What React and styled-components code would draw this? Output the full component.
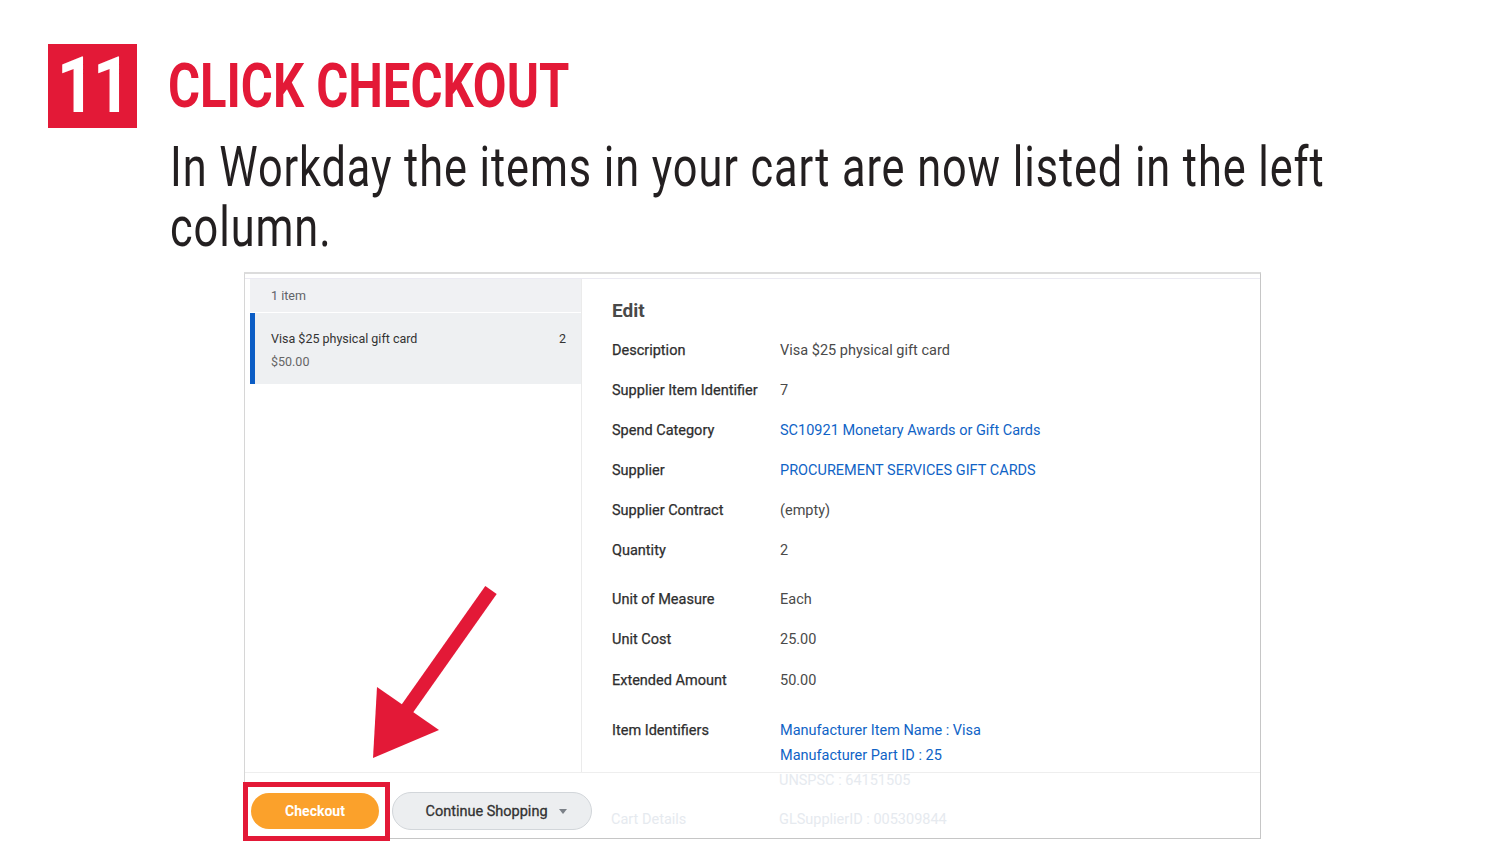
import styled, { createGlobalStyle } from 'styled-components'

const Global = createGlobalStyle`
    html, body {
        margin: 0;
        background: #ffffff;
        font-family: Roboto, "Liberation Sans", sans-serif;
    }
`

const RED = '#e31937'

const rows = [
    { label: 'Description', values: ['Visa $25 physical gift card'] },
    { label: 'Supplier Item Identifier', values: ['7'] },
    { label: 'Spend Category', values: ['SC10921 Monetary Awards or Gift Cards'], link: true },
    { label: 'Supplier', values: ['PROCUREMENT SERVICES GIFT CARDS'], link: true },
    { label: 'Supplier Contract', values: ['(empty)'] },
    { label: 'Quantity', values: ['2'] },
    { label: 'Unit of Measure', values: ['Each'], space: 9 },
    { label: 'Unit Cost', values: ['25.00'] },
    { label: 'Extended Amount', values: ['50.00'], space: 1 },
    { label: 'Item Identifiers', values: ['Manufacturer Item Name : Visa', 'Manufacturer Part ID : 25'], link: true, space: 10 },
]

export default function App() {
    return (
        <Page>
            <Global />
            <Header>
                <Badge><Squeeze $x={0.86}>11</Squeeze></Badge>
                <Title><Squeeze $x={0.79}>CLICK CHECKOUT</Squeeze></Title>
            </Header>

            <Subtitle>
                <Line>In Workday the items in your cart are now listed in the left</Line>
                <Line>column.</Line>
            </Subtitle>

            <Frame>
                <Body>
                    <Gutter />
                    <Sidebar>
                        <CountBar>1 item</CountBar>
                        <CartItem>
                            <ItemTop>
                                <span>Visa $25 physical gift card</span>
                                <span>2</span>
                            </ItemTop>
                            <ItemPrice>$50.00</ItemPrice>
                        </CartItem>
                    </Sidebar>
                    <Divider />
                    <Detail>
                        <EditTitle>Edit</EditTitle>
                        {rows.map((r) => (
                            <Row key={r.label} $space={r.space || 0}>
                                <Label>{r.label}</Label>
                                <Values>
                                    {r.values.map((v) => (
                                        <Value key={v} $link={r.link}>{v}</Value>
                                    ))}
                                </Values>
                            </Row>
                        ))}
                    </Detail>
                </Body>

                <Footer>
                    <Actions>
                        <CheckoutBtn>Checkout</CheckoutBtn>
                        <ShopBtn>
                            Continue Shopping
                            <Caret viewBox="0 0 10 6"><path d="M0 0 L10 0 L5 6 Z" fill="#7b8188" /></Caret>
                        </ShopBtn>
                    </Actions>
                    <Faded>
                        <span />
                        <span>UNSPSC : 64151505</span>
                        <span>Cart Details</span>
                        <span>GLSupplierID : 005309844</span>
                    </Faded>
                </Footer>

                <Highlight />
                <Arrow viewBox="0 0 130 178" width="130" height="178">
                    <polygon points="126.7,10 115.3,2 31.3,121 42.7,129" fill={RED} />
                    <polygon points="3,174 7,103 69,146" fill={RED} />
                </Arrow>
            </Frame>
        </Page>
    )
}

const Page = styled.div`
    padding: 44px 0 0 48px;
    height: 819px;
    overflow: hidden;
`

const Header = styled.div`
    display: flex;
    align-items: center;
    gap: 31px;
`

const Badge = styled.div`
    width: 89px;
    height: 84px;
    background: ${RED};
    color: #ffffff;
    display: flex;
    align-items: center;
    justify-content: center;
    font-weight: 700;
    font-size: 78px;
    line-height: 1;
    letter-spacing: -3px;
`

const Title = styled.h1`
    margin: 0;
    color: ${RED};
    font-size: 62px;
    font-weight: 700;
    line-height: 62px;
    white-space: nowrap;
`

const Squeeze = styled.span`
    display: inline-block;
    transform: scaleX(${(p) => p.$x});
    transform-origin: ${(p) => (p.$x > 0.8 ? 'center' : 'left center')};
`

const Subtitle = styled.div`
    margin: 9px 0 0 122px;
    color: #231f20;
    font-size: 56px;
    line-height: 60px;
    letter-spacing: 1.2px;
`

const Line = styled.div`
    white-space: nowrap;
    transform: scaleX(0.773);
    transform-origin: left center;
`

const Frame = styled.div`
    position: relative;
    margin: 15px 0 0 196px;
    width: 1015px;
    border-top: 2px solid #dcdcdc;
    border-left: 1px solid #d6d6d6;
    border-right: 1px solid #c6c6c6;
    border-bottom: 1px solid #c6c6c6;
    padding-top: 4px;
`

const Body = styled.div`
    display: grid;
    grid-template-columns: 5px 331px 1px 1fr;
    height: 493px;
    border-top: 1px solid #ebeaf2;
    overflow: hidden;
`

const Gutter = styled.div``

const Sidebar = styled.div`
    display: flex;
    flex-direction: column;
    gap: 1px;
`

const CountBar = styled.div`
    height: 33px;
    background: #f0f1f3;
    padding-left: 21px;
    display: flex;
    align-items: center;
    font-size: 12.5px;
    color: #5f6368;
`

const CartItem = styled.div`
    height: 71px;
    box-sizing: border-box;
    background: #eef0f2;
    border-left: 5px solid #0b5dc5;
    padding: 17px 15px 0 16px;
    font-size: 12.5px;
`

const ItemTop = styled.div`
    display: flex;
    justify-content: space-between;
    line-height: 18px;
    color: #333333;
`

const ItemPrice = styled.div`
    margin-top: 5px;
    line-height: 18px;
    color: #666666;
`

const Divider = styled.div`
    background: #ebebeb;
`

const Detail = styled.div`
    padding-left: 30px;
`

const EditTitle = styled.h2`
    margin: 20px 0 8px;
    font-size: 19px;
    line-height: 24px;
    font-weight: 700;
    color: #494949;
`

const Row = styled.div`
    display: grid;
    grid-template-columns: 168px 1fr;
    align-items: start;
    padding: 10px 0;
    margin-top: ${(p) => p.$space}px;
    font-size: 14.5px;
    line-height: 20px;
`

const Label = styled.div`
    color: #2e2e2e;
    -webkit-text-stroke: 0.25px #2e2e2e;
`

const Values = styled.div`
    display: flex;
    flex-direction: column;
    gap: 5px;
`

const Value = styled.div`
    color: ${(p) => (p.$link ? '#0f63c6' : '#4a4a4a')};
`

const Footer = styled.div`
    display: flex;
    height: 65px;
    border-top: 1px solid #eeeeee;
    overflow: hidden;
`

const Actions = styled.div`
    display: flex;
    align-items: center;
    gap: 13px;
    padding: 19px 0 0 6px;
    height: 38px;
`

const CheckoutBtn = styled.button`
    width: 128px;
    height: 36px;
    border: none;
    border-radius: 18px;
    background: #fba12b;
    color: #ffffff;
    font-family: Roboto, sans-serif;
    font-weight: 700;
    font-size: 14px;
`

const ShopBtn = styled.button`
    width: 200px;
    height: 38px;
    box-sizing: border-box;
    border: 1px solid #d2d6da;
    border-radius: 19px;
    background: #eceef0;
    color: #333333;
    font-family: Roboto, sans-serif;
    font-weight: 400;
    font-size: 14.5px;
    -webkit-text-stroke: 0.3px #333333;
    display: flex;
    align-items: center;
    justify-content: center;
    gap: 11px;
    padding-left: 14px;
`

const Caret = styled.svg`
    width: 8px;
    height: 5px;
`

const Faded = styled.div`
    display: grid;
    grid-template-columns: 168px auto;
    row-gap: 19px;
    margin: -2px 0 0 19px;
    font-size: 14.5px;
    line-height: 20px;
    color: #e6eaef;
    align-self: flex-start;
`

const Highlight = styled.div`
    position: absolute;
    left: -2px;
    top: 508px;
    width: 147px;
    height: 59px;
    box-sizing: border-box;
    border: 5px solid ${RED};
    pointer-events: none;
`

const Arrow = styled.svg`
    position: absolute;
    left: 125px;
    top: 310px;
`
